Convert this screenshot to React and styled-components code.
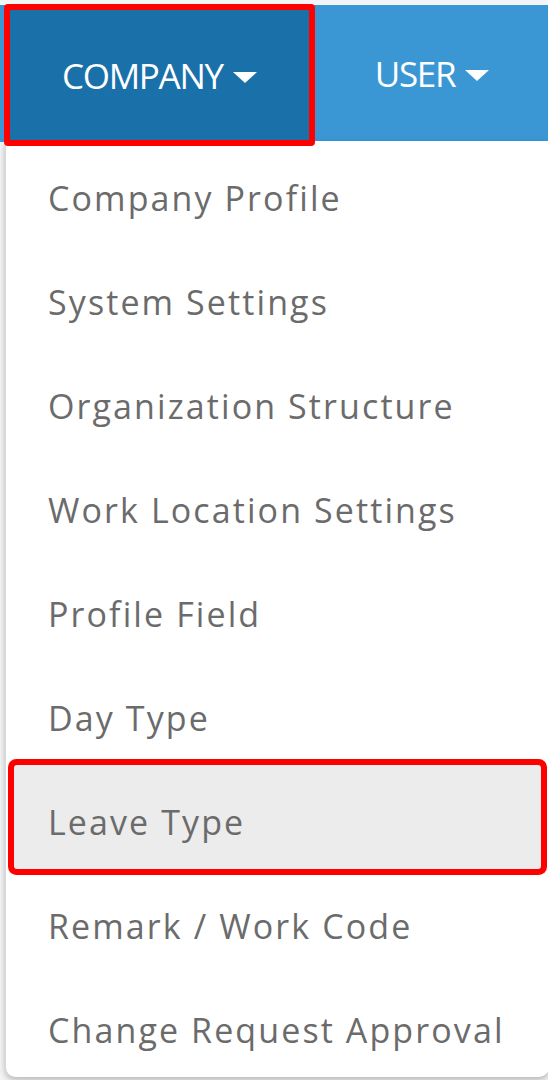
import styled, { createGlobalStyle } from "styled-components"

const GlobalStyle = createGlobalStyle`
  html, body {
    margin: 0;
    padding: 0;
    background: #f3f4f5;
    font-family: "Open Sans", "DejaVu Sans", sans-serif;
  }
`

const MENU = [
  "Company Profile",
  "System Settings",
  "Organization Structure",
  "Work Location Settings",
  "Profile Field",
  "Day Type",
  "Leave Type",
  "Remark / Work Code",
  "Change Request Approval",
]

const Page = styled.div`
  position: relative;
  height: 1080px;
  overflow: hidden;
  padding-top: 5px;
  box-sizing: border-box;
`

const NavBar = styled.nav`
  display: flex;
  align-items: flex-start;
  height: 137px;
  padding-left: 4px;
  background: #3a97d4;
`

const NavItem = styled.div`
  position: relative;
  z-index: 2;
  display: flex;
  align-items: center;
  gap: 10px;
  box-sizing: border-box;
  height: ${(p) => (p.$active ? "142px" : "137px")};
  margin-top: ${(p) => (p.$active ? "-1px" : "0")};
  padding: 0 ${(p) => (p.$active ? "52px" : "60px")};
  background: ${(p) => (p.$active ? "#1a70a9" : "transparent")};
  border: ${(p) => (p.$active ? "6px solid #ff0000" : "none")};
  border-radius: 4px;
  color: #fff;
  font-size: 35px;
  font-weight: 500;
  letter-spacing: -1.3px;
  text-transform: uppercase;
`

const Caret = styled.span`
  width: 0;
  height: 0;
  border-left: 12px solid transparent;
  border-right: 12px solid transparent;
  border-top: 11px solid #fff;
  margin-top: 4px;
`

const Menu = styled.ul`
  position: absolute;
  top: 141px;
  left: 5px;
  right: -1px;
  margin: 0;
  padding: 0;
  list-style: none;
  background: #fff;
  border-left: 1px solid #d8d8d8;
  border-radius: 0 0 10px 10px;
  box-shadow: 0 3px 6px rgba(0, 0, 0, 0.25);
`

const MenuItem = styled.li`
  display: flex;
  align-items: center;
  height: 104px;
  margin: 0 8px;
  padding: 10px 0 0 34px;
  box-sizing: border-box;
  border-radius: 3px;
  background: ${(p) => (p.$active ? "#ececec" : "transparent")};
  box-shadow: ${(p) => (p.$active ? "0 0 0 6px #ff0000" : "none")};
  color: #6b6b6b;
  font-size: 34px;
  font-weight: 500;
  letter-spacing: 2.1px;
  white-space: nowrap;
`

export default function App() {
  return (
    <Page>
      <GlobalStyle />
      <NavBar>
        <NavItem $active>
          Company <Caret />
        </NavItem>
        <NavItem>
          User <Caret />
        </NavItem>
      </NavBar>
      <Menu>
        {MENU.map((label) => (
          <MenuItem key={label} $active={label === "Leave Type"}>
            {label}
          </MenuItem>
        ))}
      </Menu>
    </Page>
  )
}
